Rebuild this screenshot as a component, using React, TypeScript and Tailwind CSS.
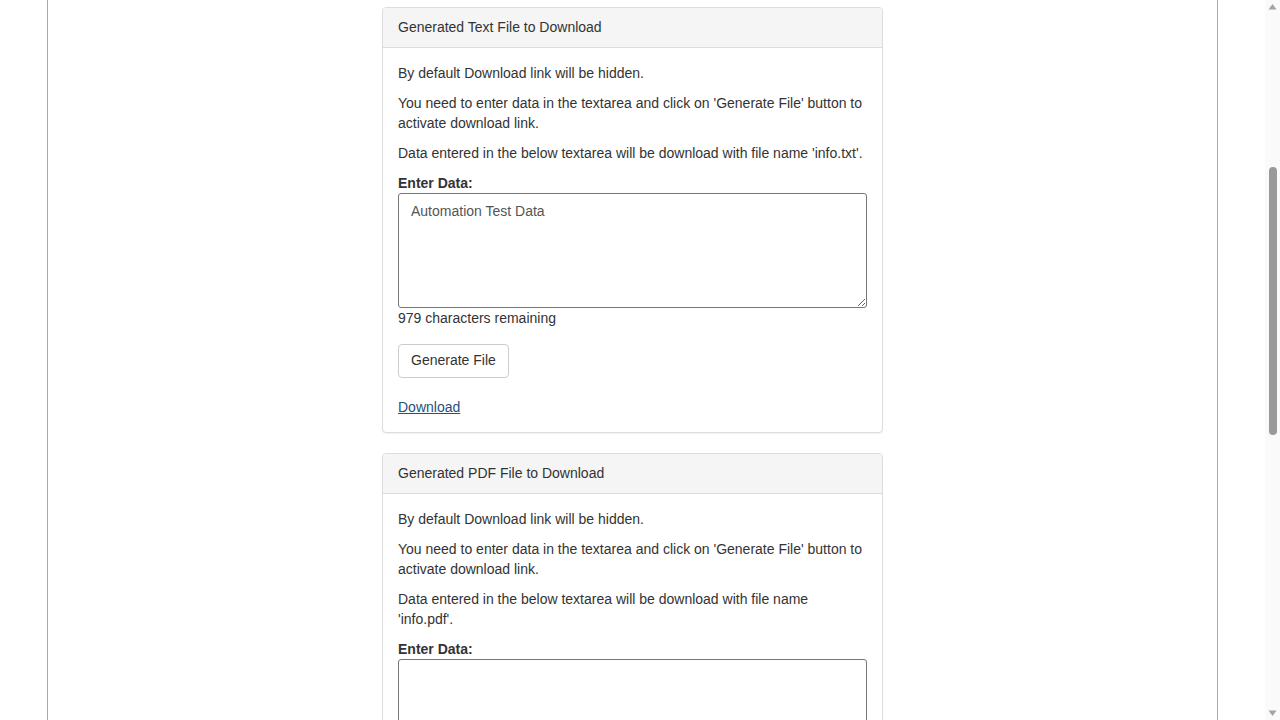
import { useEffect, useRef } from "react";

const Panel = ({
  title,
  fileName,
  value,
  remaining,
}: {
  title: string;
  fileName: string;
  value: string;
  remaining: string;
}) => {
  return (
    <div className="w-[501px] mx-auto mb-5 border border-[#ddd] rounded-[4px] bg-white shadow-[0_1px_1px_rgba(0,0,0,0.05)]">
      <div className="px-[15px] pt-[9px] pb-[10px] bg-[#f5f5f5] border-b border-[#ddd] rounded-t-[3px]">
        {title}
      </div>
      <div className="p-[15px]">
        <p className="mb-[10px]">By default Download link will be hidden.</p>
        <p className="mb-[10px]">
          You need to enter data in the textarea and click on 'Generate File' button to activate download link.
        </p>
        <p className="mb-[10px]">
          Data entered in the below textarea will be download with file name {fileName}.
        </p>
        <label className="block font-bold">Enter Data:</label>
        <textarea
          defaultValue={value}
          rows={5}
          className="block w-full h-[115px] border border-[#767676] rounded-[3px] px-3 pt-[7px] pb-2 text-[#555] leading-5 outline-none"
        />
        <div>{remaining}</div>
        <button className="mt-4 px-3 pt-[5px] pb-[7px] border border-[#ccc] rounded-[4px] bg-white text-[#333] leading-5">
          Generate File
        </button>
        <div className="mt-[19px]">
          <a href="#" className="text-[#23527c] underline">
            Download
          </a>
        </div>
      </div>
    </div>
  );
};

// browser scrollbar look-alike (headless hides the real one)
const Scrollbar = () => (
  <div className="w-[15px] h-full flex flex-col items-center bg-[#fafafa]">
    <svg width="15" height="16" viewBox="0 0 15 16" className="shrink-0">
      <path d="M3.5 9.5 L7.5 4 L11.5 9.5 Z" fill="#a3a3a3" />
    </svg>
    <div className="mt-[151px] w-2 h-[268px] rounded-full bg-[#999]" />
    <div className="flex-1" />
    <svg width="15" height="16" viewBox="0 0 15 16" className="shrink-0">
      <path d="M3.5 6.5 L7.5 12 L11.5 6.5 Z" fill="#a3a3a3" />
    </svg>
  </div>
);

export default function App() {
  const scroller = useRef<HTMLDivElement>(null);

  useEffect(() => {
    if (scroller.current) scroller.current.scrollTop = 405;
  }, []);

  return (
    <div className="h-screen flex bg-white text-[#333] text-[14px] leading-5 font-['Liberation_Sans',Arial,sans-serif]">
      <div ref={scroller} className="flex-1 overflow-hidden">
        <div className="w-[1171px] ml-[47px] border-x border-[#aaa] min-h-[1848px]">
          {/* top of page, scrolled out of view */}
          <div className="h-[412px] px-[15px] pt-5">
            <h2 className="text-[30px] leading-[36px] font-medium">Generate File to Download Demo</h2>
          </div>
          <Panel
            title="Generated Text File to Download"
            fileName="'info.txt'"
            value="Automation Test Data"
            remaining="979 characters remaining"
          />
          <Panel
            title="Generated PDF File to Download"
            fileName="'info.pdf'"
            value=""
            remaining="1000 characters remaining"
          />
        </div>
      </div>
      <Scrollbar />
    </div>
  );
}
